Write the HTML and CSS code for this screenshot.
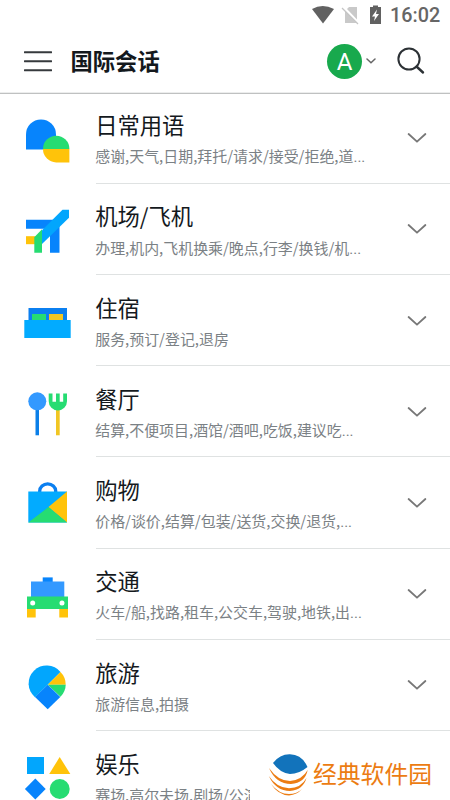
FILE: index.html
```html
<!DOCTYPE html>
<html lang="zh-CN">
<head>
<meta charset="utf-8">
<title>国际会话</title>
<link rel="stylesheet" href="styles.css">
</head>
<body>
<div class="screen">
  <div class="status">
    <svg class="status-icons" viewBox="0 0 76 30">
      <path fill="#616161" d="M0 9Q10.500 3 22 9L11 23.500Z"/>
      <path fill="#c9c9c9" d="M37 7H45V19.500L35 9Z"/>
      <path fill="#c9c9c9" d="M33 11L44.500 23H33Z"/>
      <path d="M30 8L46 24" stroke="#c4c4c4" stroke-width="1.300"/>
      <path fill="#616161" d="M58 7H61V5.500H66V7H69V24H58Z"/>
      <path fill="#fff" d="M65 9.500L60 16.500H63L62 21L67 14H64Z"/>
    </svg>
    <span class="clock">16:02</span>
  </div>
  <header class="header">
    <svg class="menu" viewBox="0 0 28 22"><path d="M.7 2.200H27.300M.7 11.200H27.300M.7 20.200H27.300" stroke="#363a3d" stroke-width="2" stroke-linecap="round"/></svg>
    <h1 class="heading">国际会话</h1>
    <span class="avatar">A</span>
    <svg class="caret" viewBox="0 0 10 6"><path d="M1 1L5 4.700L9 1" fill="none" stroke="#666" stroke-width="1.500" stroke-linecap="round"/></svg>
    <svg class="search" viewBox="0 0 28 28"><circle cx="12" cy="12" r="10.600" fill="none" stroke="#2c3135" stroke-width="2"/><path d="M19.500 19.500L26 25.500" stroke="#2c3135" stroke-width="2.400" stroke-linecap="round"/></svg>
  </header>
  <main class="list">
    <section class="row">
      <svg class="icon" viewBox="0 92.6 96 91.2">
        <path fill="#0784fc" d="M26 149V134a15 15 0 0 1 30 0V149Z"/>
        <path fill="#26dc72" d="M43 148.500a13.200 13.200 0 0 1 26.400 0Z"/>
        <path fill="#ffc30a" d="M43 148.500H69.400V162H56.200A13.400 13.400 0 0 1 43 148.500Z"/>
      </svg>
      <div class="body"><div class="text"><h2 class="title">日常用语</h2><p class="sub">感谢,天气,日期,拜托/请求/接受/拒绝,道<span class="dots">...</span></p></div>
      <svg class="chevron" viewBox="0 0 20 12"><path d="M1.600 2L10 9.700L18.400 2"/></svg></div>
    </section>
    <section class="row">
      <svg class="icon" viewBox="0 183.8 96 91.2">
        <path fill="#0784fc" d="M26 219.500H54L46 228.500H26ZM50 232L59.500 224V252.500H50Z"/>
        <path fill="#ffc30a" d="M26 236H37V244H26Z"/>
        <path fill="#26dc72" d="M34.300 237L42 229V252.500H34.300Z"/>
        <path fill="#02a6fd" d="M62.500 209.500H69V217.500L42 243.800V230Z"/>
      </svg>
      <div class="body"><div class="text"><h2 class="title">机场/飞机</h2><p class="sub">办理,机内,飞机换乘/晚点,行李/换钱/机<span class="dots">...</span></p></div>
      <svg class="chevron" viewBox="0 0 20 12"><path d="M1.600 2L10 9.700L18.400 2"/></svg></div>
    </section>
    <section class="row">
      <svg class="icon" viewBox="0 275 96 91.2">
        <path fill="#0b7ff0" d="M28.500 308H67V321H28.500Z"/>
        <path fill="#26dc72" d="M32 314H46V320.500H32Z"/>
        <path fill="#f1c623" d="M49 314H63V320.500H49Z"/>
        <path fill="#02abff" d="M24.300 320H70.700V338H24.300Z"/>
      </svg>
      <div class="body"><div class="text"><h2 class="title">住宿</h2><p class="sub">服务,预订/登记,退房</p></div>
      <svg class="chevron" viewBox="0 0 20 12"><path d="M1.600 2L10 9.700L18.400 2"/></svg></div>
    </section>
    <section class="row">
      <svg class="icon" viewBox="0 366.2 96 91.2">
        <path fill="#0b7fe8" d="M35.500 408H39V435.500H35.500Z"/>
        <circle cx="37.300" cy="401.500" r="9" fill="#3399ff"/>
        <path fill="#f1c623" d="M56 408H59.700V435.500H56Z"/>
        <path fill="#26dc72" d="M48.700 393.800H52.500V402H56V393.800H59.700V402H63.200V393.800H67V401.500A9.150 9.150 0 0 1 48.700 401.500Z"/>
      </svg>
      <div class="body"><div class="text"><h2 class="title">餐厅</h2><p class="sub">结算,不便项目,酒馆/酒吧,吃饭,建议吃<span class="dots">...</span></p></div>
      <svg class="chevron" viewBox="0 0 20 12"><path d="M1.600 2L10 9.700L18.400 2"/></svg></div>
    </section>
    <section class="row">
      <svg class="icon" viewBox="0 457.4 96 91.2">
        <path d="M39.700 493V491.500a8 7.200 0 0 1 16 0V493" fill="none" stroke="#0b7ff0" stroke-width="3.300"/>
        <path fill="#02abff" d="M28.300 492H67V523H28.300Z"/>
        <path fill="#ffc30a" d="M67 492V523L48.500 507.500Z"/>
        <path fill="#26dc72" d="M28.300 523L48.500 507.500L67 523Z"/>
      </svg>
      <div class="body"><div class="text"><h2 class="title">购物</h2><p class="sub">价格/谈价,结算/包装/送货,交换/退货,<span class="dots">...</span></p></div>
      <svg class="chevron" viewBox="0 0 20 12"><path d="M1.600 2L10 9.700L18.400 2"/></svg></div>
    </section>
    <section class="row">
      <svg class="icon" viewBox="0 548.6 96 91.2">
        <path fill="#0784fc" d="M42.700 577H52.700V582H42.700Z"/>
        <path fill="#3399ff" d="M31 581H64.300V597H31Z"/>
        <path fill="#26dc72" d="M27 596H68V608.500H27Z"/>
        <path fill="#ffc30a" d="M27 608.500H35.700V617H27ZM59.300 608.500H68V617H59.300Z"/>
        <circle cx="32.700" cy="602.500" r="2.500" fill="#fff"/><circle cx="62" cy="602.500" r="2.500" fill="#fff"/>
      </svg>
      <div class="body"><div class="text"><h2 class="title">交通</h2><p class="sub">火车/船,找路,租车,公交车,驾驶,地铁,出<span class="dots">...</span></p></div>
      <svg class="chevron" viewBox="0 0 20 12"><path d="M1.600 2L10 9.700L18.400 2"/></svg></div>
    </section>
    <section class="row">
      <svg class="icon" viewBox="0 639.8 96 91.2">
        <path fill="#02a6fd" d="M47.700 684.500L35 697A18 18 0 1 1 60.500 671.800Z"/>
        <path fill="#ffc30a" d="M47.700 684.500L60.500 671.800A18 18 0 0 1 65.700 684.500Z"/>
        <path fill="#26dc72" d="M47.700 684.500H65.700Q65.700 691 60.500 696.500Z"/>
        <path fill="#0784fc" d="M47.700 684.500L60.300 696.700L47.700 709L35 696.700Z"/>
      </svg>
      <div class="body"><div class="text"><h2 class="title">旅游</h2><p class="sub">旅游信息,拍摄</p></div>
      <svg class="chevron" viewBox="0 0 20 12"><path d="M1.600 2L10 9.700L18.400 2"/></svg></div>
    </section>
    <section class="row">
      <svg class="icon" viewBox="0 731 96 91.2">
        <path fill="#02a6fd" d="M27 757H44V774H27Z"/>
        <path fill="#ffc30a" d="M59.700 757L70.300 774H49.200Z"/>
        <path fill="#0784fc" d="M35.300 778.500L45.700 789L35.300 799.500L24.900 789Z"/>
        <circle cx="59.700" cy="789" r="10" fill="#26dc72"/>
      </svg>
      <div class="body"><div class="text"><h2 class="title">娱乐</h2><p class="sub clipped">赛场,高尔夫场,剧场/公演</p></div></div>
    </section>
  </main>
  <div class="brand">
    <svg class="brand-mark" viewBox="0 0 42 44">
      <path fill="#1273bb" d="M5 10Q12 1 22 1.300Q34 1.500 39.500 14Q31 21 22 21Q12 20 5 10Z"/>
      <path fill="#ec7c12" d="M1 15Q10 28 22 28Q34 27 39.700 17Q37 30 23 31Q8 31 1 15Z"/>
      <path fill="#ec7c12" d="M.8 23Q9 35 21 35.300Q33 35 38.500 25Q35 37 22 38Q8 38 .8 23Z"/>
      <path fill="#ec7c12" d="M3 31Q11 41 21 41Q29 41 34 36Q29 42 21 42.400Q10 42 3 31Z"/>
    </svg>
    <span class="brand-name">经典软件园</span>
  </div>
</div>
</body>
</html>
```
FILE: styles.css
```css
* { box-sizing: border-box; margin: 0; padding: 0; }
body { background: #fff; font-family: "Noto Sans CJK SC", sans-serif; }
svg { display: block; flex: none; }
.screen { position: relative; width: 450px; height: 800px; overflow: hidden; background: #fff; }
.status { display: flex; align-items: center; justify-content: flex-end; height: 30px; padding-right: 10px; }
.status-icons { width: 76px; height: 30px; margin-right: 2px; }
.clock { padding-top: 1px; font: 500 19.8px/30px Roboto, sans-serif; color: #666; width: 50px; white-space: nowrap; }
.header { display: flex; align-items: center; height: 64px; padding: 0 25px 1px 24px; border-bottom: 1px solid #bfc1c1; box-shadow: 0 -1px 0 #eceded inset; }
.menu { width: 28px; height: 22px; }
.heading { flex: 1; margin: -2px 0 0 18.5px; font-size: 22.3px; line-height: 32px; font-weight: 700; color: #14191d; }
.avatar { width: 35px; height: 35px; border-radius: 50%; background: #18a94d; color: #fff; font: 400 24px/36px Roboto, sans-serif; text-align: center; }
.caret { width: 10px; height: 6px; margin-left: 4px; }
.search { width: 28px; height: 28px; margin-left: 21px; }
.list { margin-top: -1.4px; }
.row { display: flex; height: 91.2px; }
.icon { width: 96px; height: 91.2px; }
.body { flex: 1; display: flex; align-items: center; justify-content: space-between; padding-right: 23px; border-bottom: 1px solid #dfe2e2; }
.text { margin-left: -0.8px; padding-top: 1px; white-space: nowrap; }
.title { font-size: 22.3px; line-height: 32px; font-weight: 400; color: #14191d; }
.sub { margin-top: 5.4px; font-size: 14.95px; line-height: 22px; font-weight: 400; color: #7b8185; }
.clipped { width: 155px; overflow: hidden; }
.dots { font-family: Roboto, sans-serif; }
.chevron { width: 20px; height: 12px; margin-top: 1px; fill: none; stroke: #777; stroke-width: 1.8; stroke-linecap: round; stroke-linejoin: round; }
.brand { position: absolute; left: 268px; top: 753px; display: flex; align-items: center; }
.brand-mark { width: 42px; height: 44px; }
.brand-name { margin: -4px 0 0 3px; font-size: 23.8px; line-height: 36px; font-weight: 400; color: #ec7c12; white-space: nowrap; }
```
